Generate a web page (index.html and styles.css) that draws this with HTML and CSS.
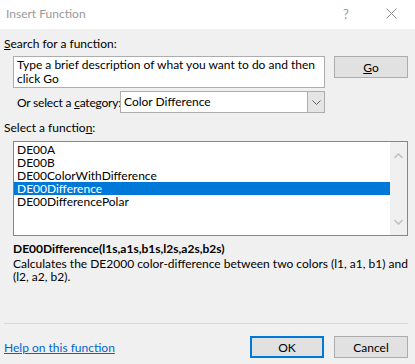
FILE: index.html
```html
<!DOCTYPE html>
<html lang="en">
<head>
    <meta charset="UTF-8">
    <title>Insert Function</title>
    <link rel="stylesheet" href="styles.css">
</head>
<body>
    <div class="dialog">
        <div class="titlebar">
            <span class="title">Insert Function</span>
            <span class="help-btn">?</span>
            <svg class="close-btn" width="11" height="11" viewBox="0 0 11 11">
                <path d="M0.5 0.5 L10.5 10.5 M10.5 0.5 L0.5 10.5" stroke="#8a8a8a" stroke-width="1" fill="none"/>
            </svg>
        </div>

        <div class="body">
            <div class="label"><u>S</u>earch for a function:</div>

            <div class="search-row">
                <div class="search-box">Type a brief description of what you want to do and then click Go</div>
                <button class="btn"><u>G</u>o</button>
            </div>

            <div class="category-row">
                <span class="cat-label">Or select a <u>c</u>ategory:</span>
                <div class="select">
                    <span class="select-value">Color Difference</span>
                    <span class="select-arrow">
                        <svg width="9" height="5" viewBox="0 0 9 5">
                            <path d="M0.5 0.5 L4.5 4.5 L8.5 0.5" stroke="#606060" fill="none"/>
                        </svg>
                    </span>
                </div>
            </div>

            <div class="label list-label">Select a functio<u>n</u>:</div>

            <div class="listbox">
                <ul class="items">
                    <li>DE00A</li>
                    <li>DE00B</li>
                    <li>DE00ColorWithDifference</li>
                    <li class="selected">DE00Difference</li>
                    <li>DE00DifferencePolar</li>
                </ul>
                <div class="scrollbar">
                    <svg width="9" height="6" viewBox="0 0 9 6">
                        <path d="M0.5 5 L4.5 1 L8.5 5" stroke="#c2c2c2" stroke-width="1.6" fill="none"/>
                    </svg>
                    <svg width="9" height="6" viewBox="0 0 9 6">
                        <path d="M0.5 1 L4.5 5 L8.5 1" stroke="#c2c2c2" stroke-width="1.6" fill="none"/>
                    </svg>
                </div>
            </div>

            <div class="signature">DE00Difference(l1s,a1s,b1s,l2s,a2s,b2s)</div>
            <p class="description">Calculates the DE2000 color-difference between two colors (l1, a1, b1) and (l2, a2, b2).</p>
        </div>

        <div class="footer">
            <a class="help-link" href="#">Help on this function</a>
            <div class="buttons">
                <button class="btn btn-default">OK</button>
                <button class="btn">Cancel</button>
            </div>
        </div>
    </div>
</body>
</html>
```

FILE: styles.css
```css
* {
    margin: 0;
    padding: 0;
    box-sizing: border-box;
}

body {
    background-color: #f0f0f0;
    font-family: Lato, "Noto Sans", sans-serif;
    font-size: 12px;
    color: #000;
    width: 415px;
    height: 364px;
    overflow: hidden;
}

.dialog {
    display: flex;
    flex-direction: column;
    height: 364px;
}

/* Title bar */
.titlebar {
    height: 29px;
    background-color: #fff;
    display: flex;
    align-items: center;
    padding-left: 6px;
    color: #999;
}

.title {
    flex: 1;
    margin-top: -2px;
}

.help-btn {
    width: 43px;
    font-size: 13px;
    margin-top: -2px;
}

.close-btn {
    margin-right: 18px;
    margin-top: -2px;
}

/* Main area */
.body {
    padding: 7px 7px 0 4px;
    flex: 1;
}

.label {
    line-height: 15px;
    height: 15px;
    white-space: nowrap;
}

.search-row {
    display: flex;
    gap: 9px;
    margin-top: 5px;
    padding-left: 9px;
    align-items: flex-start;
}

.search-box {
    width: 312px;
    height: 32px;
    background-color: #fff;
    border: 1px solid #adadad;
    padding: 1px 3px;
    line-height: 14px;
}

.btn {
    width: 74px;
    height: 22px;
    background-color: #e1e1e1;
    border: 1px solid #adadad;
    font-family: inherit;
    font-size: 12px;
    color: #000;
}

.btn-default {
    border: 2px solid #0078d7;
}

.category-row {
    display: flex;
    align-items: center;
    margin-top: 3px;
    padding-left: 13px;
}

.cat-label {
    width: 103px;
    white-space: nowrap;
    letter-spacing: -0.2px;
}

.select {
    width: 205px;
    height: 22px;
    display: flex;
    background-color: #fff;
    border: 1px solid #adadad;
}

.select-value {
    flex: 1;
    line-height: 20px;
    padding-left: 3px;
}

.select-arrow {
    width: 17px;
    background-color: #e5e5e5;
    border-left: 1px solid #adadad;
    display: flex;
    align-items: center;
    justify-content: center;
}

.list-label {
    margin-top: 7px;
}

/* Function list */
.listbox {
    margin: 6px 0 0 9px;
    width: 395px;
    height: 95px;
    border: 1px solid #828790;
    display: flex;
    background-color: #fff;
}

.items {
    list-style: none;
    flex: 1;
    padding-top: 1px;
}

.items li {
    height: 13px;
    line-height: 13px;
    padding-left: 3px;
}

.items li.selected {
    background-color: #0078d7;
    color: #fff;
}

.scrollbar {
    width: 17px;
    background-color: #f0f0f0;
    display: flex;
    flex-direction: column;
    justify-content: space-between;
    align-items: center;
    padding: 11px 0 10px;
}

.signature {
    font-weight: bold;
    margin: 6px 0 0 9px;
    line-height: 13px;
}

.description {
    margin: 2px 0 0 9px;
    line-height: 13px;
    width: 395px;
}

/* Footer */
.footer {
    border-top: 1px solid #dadada;
    margin: 0 7px 6px 4px;
    padding-top: 12px;
    display: flex;
    align-items: center;
}

.help-link {
    flex: 1;
    color: #0066cc;
}

.buttons {
    display: flex;
    gap: 10px;
}
```
